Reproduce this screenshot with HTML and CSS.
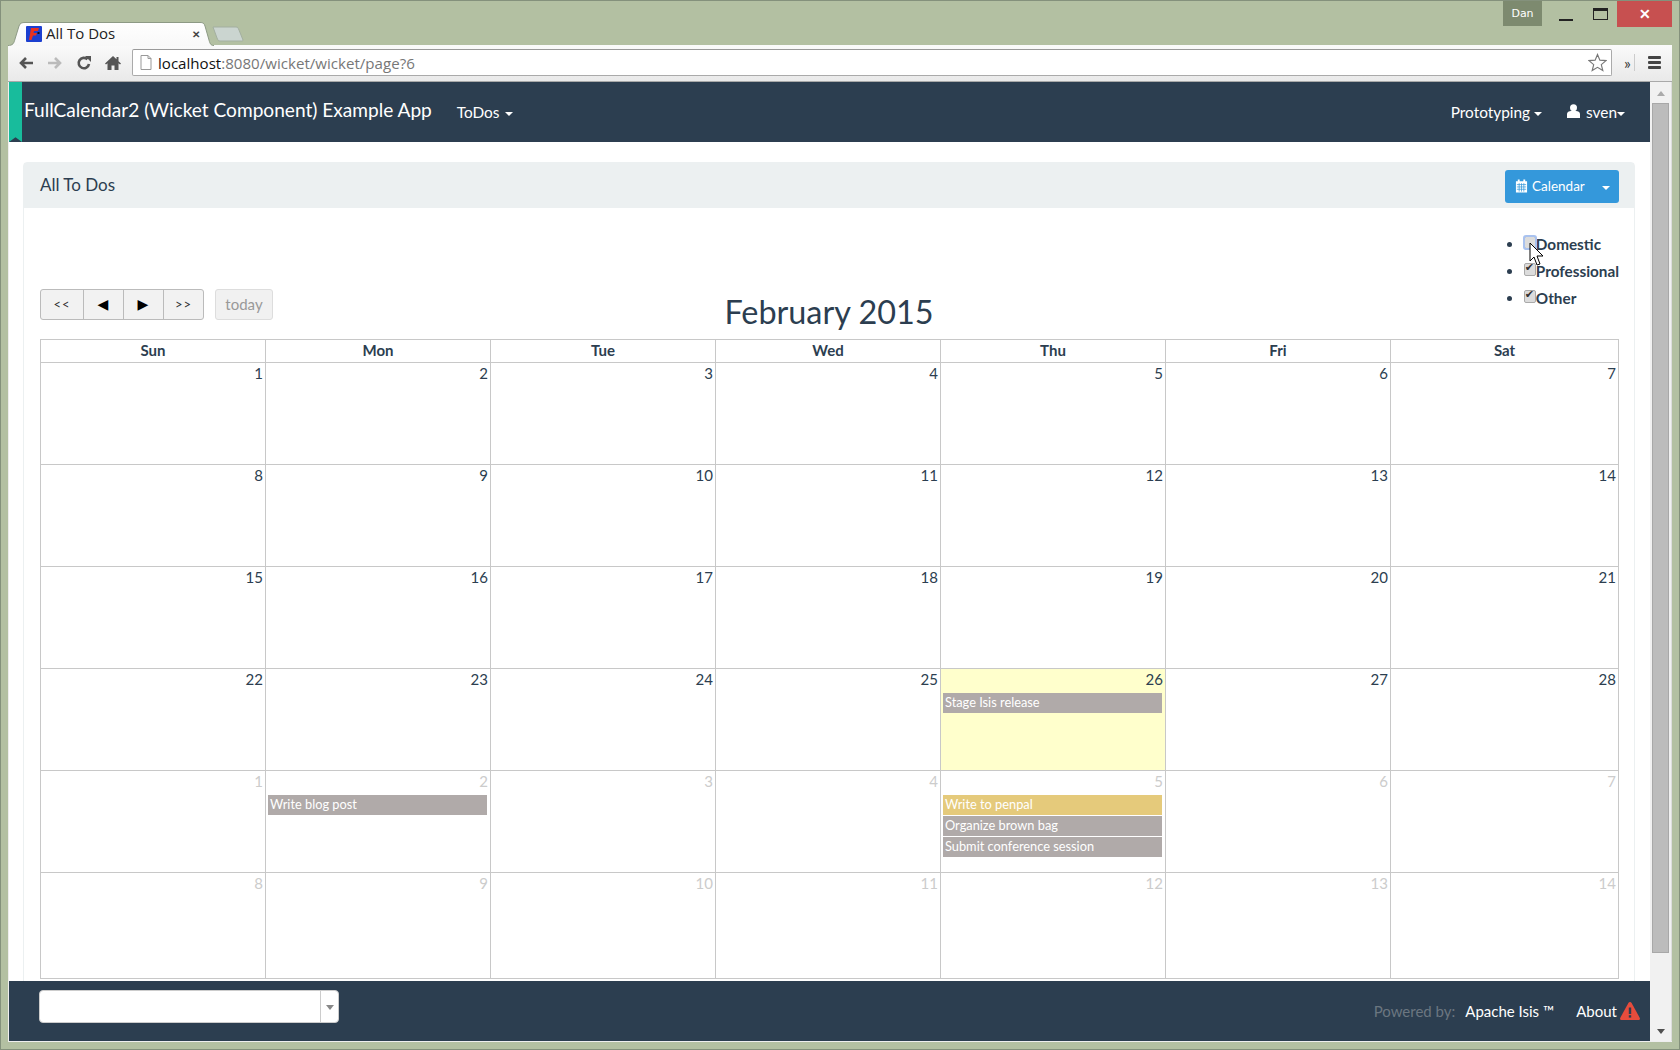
FILE: index.html
```html
<!DOCTYPE html>
<html lang="en">
<head>
  <meta charset="UTF-8" />
  <title>All To Dos</title>
  <link rel="stylesheet" href="styles.css">
</head>
<body>

<div class="window">

  <!-- Tab strip and window controls -->
  <div class="strip">
    <div class="tab">
      <svg class="tab-shape" viewBox="0 0 206 24" width="206" height="24">
        <defs>
          <linearGradient id="tabFill" x1="0" y1="0" x2="0" y2="1">
            <stop offset="0" stop-color="#ffffff"/>
            <stop offset="1" stop-color="#f8f8f8"/>
          </linearGradient>
        </defs>
        <path d="M0,24 C5,24 6,21 7,17 L11,4 C12,1 14,.5 17,.5 L192,.5 C195,.5 196,1 197,4 L201,18 C202,22 203,24 206,24 Z" fill="url(#tabFill)"/>
        <path d="M0,23.500 C5,23.500 6,21 7,17 L11,4 C12,1 14,.5 17,.5 L192,.5 C195,.5 196,1 197,4 L201,18 C202,22 203,23.500 206,23.500" fill="none" stroke="#8d9a85"/>
      </svg>
      <svg class="favicon" viewBox="0 0 16 16" width="16" height="16">
        <rect width="16" height="16" rx="1" fill="#1c3fd0"/>
        <path d="M5,2 H13 L12,5 H8 L7.500,7 H11 L10,9.500 H7 L5.500,14 H3 Z" fill="#e8321f"/>
        <rect x="11.500" y="6" width="2" height="2" fill="#111"/>
      </svg>
      <span class="tab-title">All To Dos</span>
      <span class="tab-close">&#10005;</span>
    </div>
    <svg class="new-tab" viewBox="0 0 32 16" width="32" height="16">
      <path d="M1,1 H24 C26,1 26,2 27,4 L31,14 C31,15 30,15 29,15 H8 C6,15 6,14 5,12 Z" fill="#cbd5d0" stroke="#a3afa0"/>
    </svg>
    <div class="controls">
      <span class="profile">Dan</span>
      <span class="ctl ctl-min"><i></i></span>
      <span class="ctl ctl-max"><i></i></span>
      <span class="ctl-close">&#10005;</span>
    </div>
  </div>

  <!-- Browser toolbar -->
  <div class="toolbar">
    <svg class="tool" viewBox="0 0 16 16" width="16" height="16"><path d="M15,8 H4 M8,3 L3,8 L8,13" fill="none" stroke="#555" stroke-width="2.600"/></svg>
    <svg class="tool" viewBox="0 0 16 16" width="16" height="16"><path d="M1,8 H12 M8,3 L13,8 L8,13" fill="none" stroke="#bbb" stroke-width="2.600"/></svg>
    <svg class="tool" viewBox="0 0 16 16" width="16" height="16"><path d="M13,9 A5.200,5.200 0 1 1 11.500,4.300" fill="none" stroke="#555" stroke-width="2.600"/><path d="M9,1 H15 V7 Z" fill="#555"/></svg>
    <svg class="tool" viewBox="0 0 16 16" width="16" height="16"><path d="M8,1 L0,8.500 L1,9.500 L2.500,8.300 V15 H6.500 V10.500 H9.500 V15 H13.500 V8.300 L15,9.500 L16,8.500 L13.500,6.200 V2 H11.500 V4.300 Z" fill="#555"/></svg>
    <div class="omnibox">
      <svg viewBox="0 0 12 15" width="12" height="15"><path d="M1,.5 H8 L11,3.500 V14.500 H1 Z M8,.5 V3.500 H11" fill="#fff" stroke="#999"/></svg>
      <span class="url"><b>localhost</b>:8080/wicket/wicket/page?6</span>
      <svg class="star" viewBox="0 0 20 20" width="19" height="19"><path d="M10,1.500 L12.500,7.500 L19,8 L14,12.200 L15.600,18.500 L10,15.100 L4.400,18.500 L6,12.200 L1,8 L7.500,7.500 Z" fill="#fff" stroke="#777" stroke-width="1.200"/></svg>
    </div>
    <span class="more">&raquo;</span>
    <span class="burger"><i></i><i></i><i></i></span>
  </div>

  <!-- Page and scrollbar -->
  <div class="viewport">
    <div class="page">

      <nav class="navbar">
        <span class="ribbon"></span>
        <a class="brand">FullCalendar2 (Wicket Component) Example App</a>
        <a class="nav-link todos">ToDos <span class="caret"></span></a>
        <div class="nav-right">
          <a class="nav-link">Prototyping <span class="caret"></span></a>
          <a class="nav-link user">
            <svg viewBox="0 0 13 14" width="13" height="14"><circle cx="6.500" cy="3.800" r="3.500" fill="#fff"/><path d="M0,14 V10 C0,8 2,7 4,7 H9 C11,7 13,8 13,10 V14 Z" fill="#fff"/></svg>
            sven<span class="caret"></span>
          </a>
        </div>
      </nav>

      <main class="content">
        <section class="panel">
          <header class="panel-head">
            <span class="panel-title">All To Dos</span>
            <div class="split">
              <span class="split-main">
                <svg viewBox="0 0 14 14" width="13" height="14"><path d="M1,2 H3 V0 H5 V2 H9 V0 H11 V2 H13 V14 H1 Z" fill="#fff"/><path d="M2,5.500 H12 M2,8 H12 M2,10.500 H12 M4.500,4 V13 M7,4 V13 M9.500,4 V13" stroke="#3498db" stroke-width=".8"/></svg>
                Calendar
              </span>
              <span class="split-arrow"><span class="caret"></span></span>
            </div>
          </header>

          <div class="panel-body">
            <div class="fc-head">
              <div class="fc-left">
                <div class="btn-group">
                  <span class="fc-btn">&lt;&lt;</span>
                  <span class="fc-btn fc-arrow">&#9664;</span>
                  <span class="fc-btn fc-arrow">&#9654;</span>
                  <span class="fc-btn">&gt;&gt;</span>
                </div>
                <span class="fc-today">today</span>
              </div>
              <h2 class="fc-title">February 2015</h2>
              <ul class="filters">
                <li><input type="checkbox" class="focused"><span>Domestic</span></li>
                <li><input type="checkbox" checked><span>Professional</span></li>
                <li><input type="checkbox" checked><span>Other</span></li>
              </ul>
            </div>

            <table class="month">
              <thead>
                <tr><th>Sun</th><th>Mon</th><th>Tue</th><th>Wed</th><th>Thu</th><th>Fri</th><th>Sat</th></tr>
              </thead>
              <tbody>
                <tr>
                  <td><div class="num">1</div></td><td><div class="num">2</div></td><td><div class="num">3</div></td><td><div class="num">4</div></td><td><div class="num">5</div></td><td><div class="num">6</div></td><td><div class="num">7</div></td>
                </tr>
                <tr>
                  <td><div class="num">8</div></td><td><div class="num">9</div></td><td><div class="num">10</div></td><td><div class="num">11</div></td><td><div class="num">12</div></td><td><div class="num">13</div></td><td><div class="num">14</div></td>
                </tr>
                <tr>
                  <td><div class="num">15</div></td><td><div class="num">16</div></td><td><div class="num">17</div></td><td><div class="num">18</div></td><td><div class="num">19</div></td><td><div class="num">20</div></td><td><div class="num">21</div></td>
                </tr>
                <tr>
                  <td><div class="num">22</div></td><td><div class="num">23</div></td><td><div class="num">24</div></td><td><div class="num">25</div></td>
                  <td class="today"><div class="num">26</div><div class="event">Stage Isis release</div></td>
                  <td><div class="num">27</div></td><td><div class="num">28</div></td>
                </tr>
                <tr class="other">
                  <td><div class="num">1</div></td>
                  <td><div class="num">2</div><div class="event">Write blog post</div></td>
                  <td><div class="num">3</div></td><td><div class="num">4</div></td>
                  <td><div class="num">5</div>
                    <div class="event gold">Write to penpal</div>
                    <div class="event">Organize brown bag</div>
                    <div class="event">Submit conference session</div>
                  </td>
                  <td><div class="num">6</div></td><td><div class="num">7</div></td>
                </tr>
                <tr class="other last">
                  <td><div class="num">8</div></td><td><div class="num">9</div></td><td><div class="num">10</div></td><td><div class="num">11</div></td><td><div class="num">12</div></td><td><div class="num">13</div></td><td><div class="num">14</div></td>
                </tr>
              </tbody>
            </table>
          </div>
        </section>
      </main>

      <footer class="footer">
        <div class="combo"><span class="combo-arrow"></span></div>
        <div class="foot-right">
          <span class="powered">Powered by:</span>
          <a class="foot-link">Apache Isis &trade;</a>
          <a class="foot-link about">About</a>
          <svg viewBox="0 0 20 18" width="20" height="18"><path d="M10,0 C10.800,0 11.200,.4 11.600,1 L19.700,15.800 C20.300,17 19.600,18 18.400,18 H1.600 C.4,18 -.3,17 .3,15.800 L8.400,1 C8.800,.4 9.200,0 10,0 Z" fill="#e74c3c"/><rect x="8.800" y="5.500" width="2.400" height="6.500" fill="#2c3e50"/><rect x="8.800" y="13.200" width="2.400" height="2.400" fill="#2c3e50"/></svg>
        </div>
      </footer>
    </div>

    <div class="scrollbar">
      <span class="sb-up"></span>
      <span class="sb-thumb"></span>
      <span class="sb-down"></span>
    </div>
  </div>
</div>

<!-- Mouse pointer -->
<svg class="pointer" viewBox="0 0 16 25" width="16" height="25"><path d="M1,1 V19 L5,15 L8,23 L11,22 L8,14 L14,14 Z" fill="#fff" stroke="#000"/></svg>

</body>
</html>
```

FILE: styles.css
```css
html, body {
  margin: 0;
  padding: 0;
  height: 100%;
  overflow: hidden;
}

body {
  background: #b3c0a2;
  box-shadow: inset 0 0 0 1px #84917c;
  font-family: "Lato", "Liberation Sans", sans-serif;
  font-size: 15px;
  color: #2c3e50;
  position: relative;
}

.window {
  height: 1050px;
  padding: 0 8px 8px 8px;
  box-sizing: border-box;
  display: flex;
  flex-direction: column;
}

/* Tab strip */
.strip {
  height: 45px;
  flex: none;
  display: flex;
  align-items: flex-end;
  position: relative;
}

.tab {
  width: 206px;
  height: 23px;
  position: relative;
  display: flex;
  align-items: center;
  font-family: "Open Sans", sans-serif;
  font-size: 15px;
  color: #222;
  z-index: 1;
}

.tab-shape {
  position: absolute;
  left: 0;
  top: 0;
}

.favicon {
  position: relative;
  margin-left: 18px;
}

.tab-title {
  position: relative;
  margin-left: 4px;
  margin-top: -2px;
  flex: 1;
}

.tab-close {
  position: relative;
  font-size: 10px;
  margin-right: 14px;
  font-weight: bold;
  color: #444;
}

.new-tab {
  margin-left: -2px;
  margin-bottom: 3px;
}

.controls {
  margin-left: auto;
  align-self: flex-start;
  display: flex;
  padding-top: 1px;
}

.profile {
  width: 39px;
  height: 25px;
  background: #7d8a6f;
  color: #fff;
  font-family: "DejaVu Sans", sans-serif;
  font-size: 11px;
  text-align: center;
  line-height: 25px;
  margin-right: 7px;
}

.ctl {
  width: 34px;
  height: 26px;
  position: relative;
  display: flex;
  align-items: center;
  justify-content: center;
}

.ctl-min i {
  width: 14px;
  height: 2px;
  margin-top: 11px;
  background: #222;
}

.ctl-max i {
  width: 13px;
  height: 8px;
  border: 1px solid #222;
  border-top-width: 3px;
  margin-top: -1px;
}

.ctl-close {
  width: 55px;
  height: 26px;
  background: #c75050;
  color: #fff;
  text-align: center;
  font-size: 14px;
  font-weight: bold;
  line-height: 26px;
}

/* Toolbar */
.toolbar {
  height: 37px;
  flex: none;
  box-sizing: border-box;
  background: linear-gradient(#fafafa, #e9e9e9);
  border-bottom: 1px solid #a9a9a9;
  display: flex;
  align-items: center;
  padding: 0 11px 1px 10px;
  gap: 13px;
}

.omnibox {
  flex: 1;
  height: 27px;
  margin-left: -2px;
  margin-right: -5px;
  box-sizing: border-box;
  background: #fff;
  border: 1px solid #aaa;
  border-top-color: #999;
  border-radius: 2px;
  display: flex;
  align-items: center;
  padding: 0 4px 0 7px;
  font-family: "Open Sans", sans-serif;
  font-size: 15.100px;
  color: #777;
}

.url {
  margin-left: 6px;
  flex: 1;
}

.url b {
  font-weight: normal;
  color: #111;
}

.more {
  font-size: 16px;
  color: #333;
  width: 15px;
  padding-left: 4px;
  border-right: 1px solid #ccc;
  line-height: 17px;
  box-sizing: border-box;
}

.burger {
  width: 13px;
  display: flex;
  flex-direction: column;
  gap: 2px;
}

.burger i {
  height: 3px;
  border-radius: 1px;
  background: #444;
}

/* Page */
.viewport {
  flex: 1;
  min-height: 0;
  display: flex;
  border-bottom: 1px solid #eee;
}

.page {
  flex: 1;
  min-width: 0;
  background: #fff;
  border-left: 1px solid #eee;
  display: flex;
  flex-direction: column;
}

.navbar {
  height: 60px;
  flex: none;
  background: #2c3e50;
  display: flex;
  align-items: center;
  color: #fff;
  position: relative;
}

.ribbon {
  width: 13px;
  height: 60px;
  flex: none;
  background: #18bc9c;
  clip-path: polygon(0 0, 100% 0, 100% 100%, 50% 92%, 0 100%);
}

.brand {
  font-size: 19.100px;
  margin-left: 2px;
  margin-top: -5px;
}

.nav-link {
  margin-left: 24px;
  font-size: 15.400px;
  white-space: nowrap;
}

.nav-link.todos {
  margin-left: 25px;
}

.todos .caret {
  margin-left: 2px;
}

.nav-right {
  margin-left: auto;
  padding-right: 25px;
  display: flex;
  gap: 1px;
}

.user svg {
  margin-right: 2px;
}

.caret {
  display: inline-block;
  width: 0;
  height: 0;
  border-top: 4px solid #fff;
  border-left: 4px solid transparent;
  border-right: 4px solid transparent;
  vertical-align: middle;
}

.content {
  flex: 1;
  min-height: 0;
  overflow: hidden;
  padding: 20px 15px 0 14px;
}

.panel {
  border: 1px solid #ecf0f1;
  border-radius: 4px;
  padding-bottom: 20px;
}

.panel-head {
  background: #ecf0f1;
  height: 45px;
  display: flex;
  align-items: center;
  justify-content: space-between;
  padding: 0 15px 0 16px;
  font-size: 17px;
}

.panel-title {
  margin-top: -3px;
}

.split {
  display: flex;
  height: 33px;
  margin-top: 1px;
  background: #3498db;
  border-radius: 3px;
  color: #fff;
  font-size: 13.500px;
  align-items: center;
}

.split-main {
  width: 87px;
  box-sizing: border-box;
  padding-left: 10px;
  display: flex;
  align-items: center;
  gap: 4px;
}

.split-arrow {
  width: 27px;
  text-align: center;
}

.panel-body {
  padding: 15px 16px 0;
}

.fc-head {
  display: grid;
  grid-template-columns: 1fr auto 1fr;
  align-items: end;
  margin-bottom: 3px;
}

.fc-left {
  display: flex;
  gap: 11px;
  margin-bottom: 16px;
}

.btn-group {
  display: flex;
  height: 31px;
  box-sizing: border-box;
  border: 1px solid #bbb;
  border-radius: 3px;
  background: #f2f2f2;
}

.fc-btn {
  width: 40px;
  box-sizing: border-box;
  text-align: center;
  font-size: 13px;
  line-height: 29px;
  color: #333;
  border-left: 1px solid #bbb;
  letter-spacing: 1px;
}

.fc-btn:first-child {
  border-left: 0;
  width: 42px;
}

.fc-arrow {
  font-family: "DejaVu Sans", sans-serif;
  font-size: 14px;
  color: #000;
}

.fc-today {
  width: 56px;
  height: 29px;
  border: 1px solid #ddd;
  border-radius: 3px;
  background: #f1f1f1;
  color: #999;
  text-align: center;
  line-height: 29px;
}

.fc-title {
  margin: 0 0 4px;
  font-size: 32.400px;
  font-weight: normal;
  line-height: 40px;
}

.filters {
  justify-self: end;
  margin: 0 -1px 0 0;
  padding: 12px 0 20px 0;
  list-style: disc;
  font-weight: bold;
  font-size: 15.300px;
}

.filters li {
  height: 27px;
  margin-left: 27px;
}

.filters input {
  appearance: none;
  width: 12px;
  height: 13px;
  margin: 0;
  box-sizing: border-box;
  border: 1px solid #aaa;
  border-radius: 2px;
  background: #dcdcdc;
  vertical-align: baseline;
  position: relative;
  top: -1px;
}

.filters input:checked::after {
  content: "\2714";
  position: absolute;
  left: 0;
  top: -3px;
  font-family: "DejaVu Sans", sans-serif;
  font-weight: normal;
  font-size: 11px;
  color: #333;
}

.filters input.focused {
  outline: 2px solid #a9c2ef;
  outline-offset: -1px;
}

.month {
  width: 1579px;
  table-layout: fixed;
  border-collapse: collapse;
}

.month th, .month td {
  border: 1px solid #c8c8c8;
  padding: 0;
}

.month th {
  width: 224px;
  height: 19px;
  padding-bottom: 3px;
  font-weight: bold;
  font-size: 15px;
  line-height: 18px;
}

.month th:last-child {
  width: auto;
}

.month td {
  height: 101px;
  vertical-align: top;
}

.month .last td {
  height: 105px;
}

.num {
  text-align: right;
  padding: 0 2px 0 0;
  line-height: 20px;
  margin-bottom: 4px;
}

.other .num {
  color: #ccc;
}

.today {
  background: #ffc;
}

.event {
  height: 20px;
  margin: 0 3px 1px 2px;
  padding-left: 2px;
  background: #b0aaa9;
  color: #fff;
  font-size: 12.800px;
  line-height: 19px;
}

.event.gold {
  background: #e5ca7b;
}

.footer {
  height: 60px;
  flex: none;
  background: #2c3e50;
  display: flex;
  align-items: center;
  justify-content: space-between;
  padding: 0 10px 0 30px;
  color: #fff;
}

.combo {
  width: 300px;
  height: 33px;
  margin-top: -9px;
  box-sizing: border-box;
  background: #fff;
  border: 1px solid #ccc;
  border-radius: 4px;
  display: flex;
  justify-content: flex-end;
}

.combo-arrow {
  width: 17px;
  border-left: 1px solid #ccc;
  position: relative;
}

.combo-arrow::after {
  content: "";
  position: absolute;
  left: 5px;
  top: 14px;
  border-top: 5px solid #888;
  border-left: 4px solid transparent;
  border-right: 4px solid transparent;
}

.foot-right {
  display: flex;
  align-items: center;
}

.powered {
  color: #6b7680;
  margin-right: 10px;
}

.foot-link {
  margin-right: 22px;
}

.foot-link.about {
  margin-right: 3px;
}

/* Scrollbar */
.scrollbar {
  width: 22px;
  flex: none;
  background: #f1f1f1;
  border-right: 1px solid #ddd;
  box-sizing: border-box;
  display: flex;
  flex-direction: column;
  align-items: center;
  padding: 9px 0 7px;
}

.sb-up, .sb-down {
  width: 0;
  height: 0;
  border-left: 4px solid transparent;
  border-right: 4px solid transparent;
  flex: none;
}

.sb-up {
  border-bottom: 5px solid #aaa;
}

.sb-down {
  border-top: 5px solid #505050;
  margin-top: auto;
}

.sb-thumb {
  width: 17px;
  height: 850px;
  margin-top: 7px;
  box-sizing: border-box;
  background: #bcbcbc;
  border: 1px solid #a8a8a8;
}

.pointer {
  position: absolute;
  left: 1529px;
  top: 242px;
}
```
